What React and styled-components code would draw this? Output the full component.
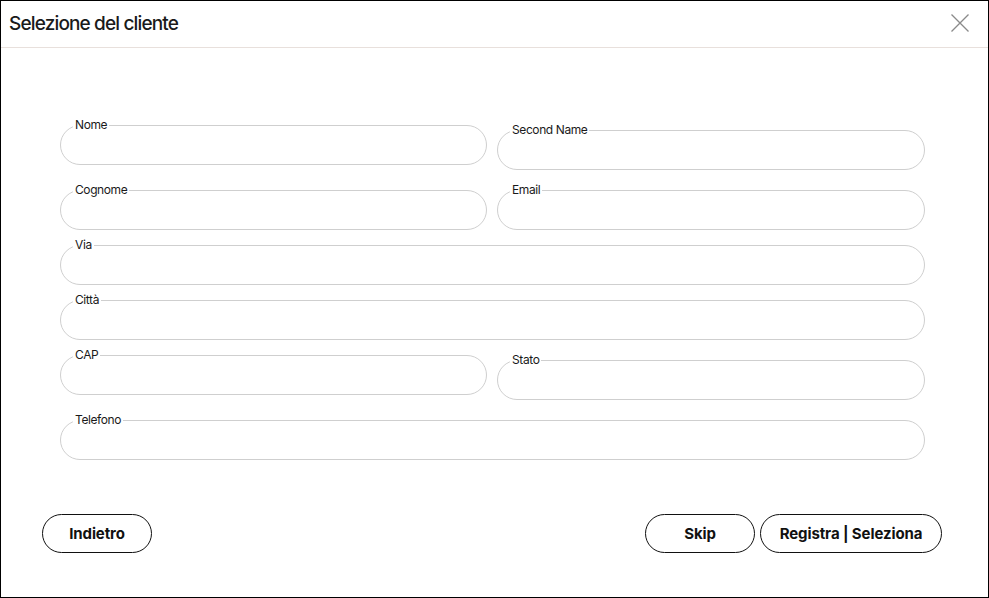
import React from "react";
import styled, { createGlobalStyle } from "styled-components";

const Global = createGlobalStyle`
  * { box-sizing: border-box; }
  html, body { margin: 0; padding: 0; background: #fff; }
  body { font-family: Inter, "Noto Sans", sans-serif; color: #111; }
`;

const Modal = styled.div`
  width: 989px;
  height: 598px;
  border: 1px solid #000;
  display: flex;
  flex-direction: column;
  background: #fff;
`;

const Header = styled.div`
  height: 47px;
  border-bottom: 1px solid #e8e0dc;
  display: flex;
  align-items: center;
  justify-content: space-between;
  padding: 0 19px 2px 8px;
`;

const Title = styled.h1`
  margin: 0;
  font-size: 19px;
  font-weight: 500;
  letter-spacing: -0.85px;
  color: #1a1a1a;
`;

const CloseButton = styled.button`
  width: 18px;
  height: 18px;
  padding: 0;
  border: none;
  background: none;
  display: flex;
  cursor: pointer;
`;

const Body = styled.div`
  padding: 70px 63px 0 59px;
`;

const Grid = styled.div`
  display: grid;
  grid-template-columns: 427px 1fr;
  column-gap: 10px;
  row-gap: 8px;
  align-items: start;
`;

const Field = styled.fieldset`
  margin: ${(p) => (p.$offset ? "5px 0" : "0")};
  grid-column: ${(p) => (p.$full ? "1 / -1" : "auto")};
  padding: 0 12px;
  min-width: 0;
  border: 1px solid #cfcfcf;
  border-radius: 20px;
`;

const Legend = styled.legend`
  padding: 0 2px;
  font-size: 12px;
  line-height: 14px;
  letter-spacing: -0.4px;
  color: #1a1a1a;
`;

const Input = styled.input`
  display: block;
  width: 100%;
  height: 32px;
  border: none;
  outline: none;
  background: transparent;
  font: inherit;
  font-size: 14px;
`;

const Footer = styled.div`
  margin-top: auto;
  display: flex;
  justify-content: space-between;
  align-items: center;
  padding: 0 46px 44px 41px;
`;

const Group = styled.div`
  display: flex;
  gap: 5px;
`;

const Button = styled.button`
  height: 39px;
  width: ${(p) => p.$w}px;
  border: 1px solid #111;
  border-radius: 20px;
  background: #fff;
  font-family: Inter, "Noto Sans", sans-serif;
  font-size: 15px;
  font-weight: 700;
  letter-spacing: -0.1px;
  color: #111;
  cursor: pointer;
  padding: 0 0 1px;
`;

const fields = [
  { label: "Nome" },
  { label: "Second Name", offset: true },
  { label: "Cognome" },
  { label: "Email" },
  { label: "Via", full: true },
  { label: "Città", full: true },
  { label: "CAP" },
  { label: "Stato", offset: true },
  { label: "Telefono", full: true },
];

export default function App() {
  return (
    <>
      <Global />
      <Modal>
        <Header>
          <Title>Selezione del cliente</Title>
          <CloseButton aria-label="Chiudi">
            <svg width="18" height="18" viewBox="0 0 18 18">
              <path d="M0.5 0.5 L17.5 17.5 M17.5 0.5 L0.5 17.5" stroke="#8a8a8a" strokeWidth="1.3" fill="none" />
            </svg>
          </CloseButton>
        </Header>
        <Body>
          <Grid>
            {fields.map((f) => (
              <Field key={f.label} $full={f.full} $offset={f.offset}>
                <Legend>{f.label}</Legend>
                <Input />
              </Field>
            ))}
          </Grid>
        </Body>
        <Footer>
          <Button $w={110}>Indietro</Button>
          <Group>
            <Button $w={110}>Skip</Button>
            <Button $w={182}>Registra | Seleziona</Button>
          </Group>
        </Footer>
      </Modal>
    </>
  );
}
